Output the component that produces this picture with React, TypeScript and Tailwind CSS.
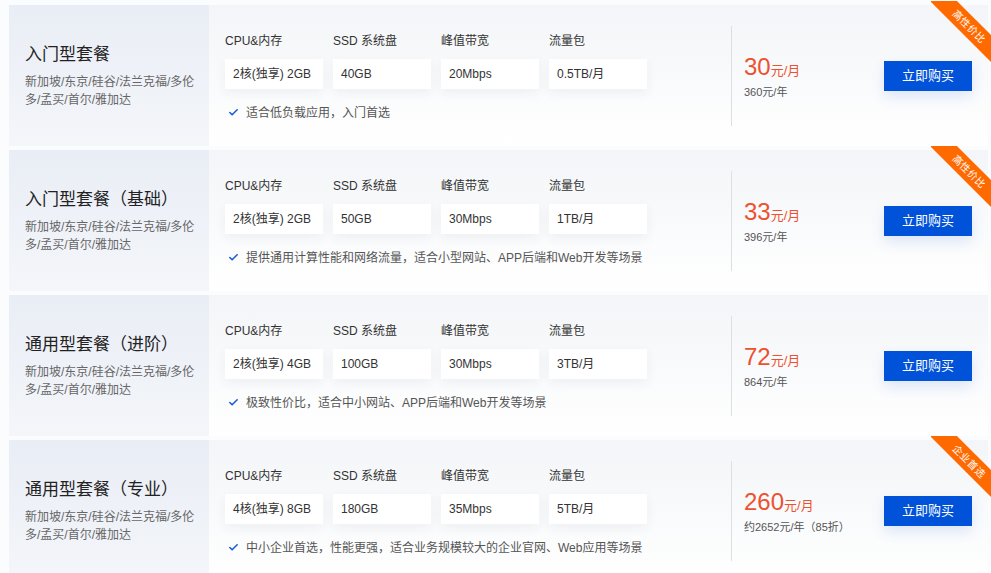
import { Check } from 'lucide-react'

interface Plan {
  id: string
  name: string
  regions: string
  cpu: string
  disk: string
  bandwidth: string
  traffic: string
  desc: string
  price: string
  yearly: string
  tag: string
}

// 套餐数据
const plans: Plan[] = [
  {
    id: 'starter',
    name: '入门型套餐',
    regions: '新加坡/东京/硅谷/法兰克福/多伦多/孟买/首尔/雅加达',
    cpu: '2核(独享) 2GB',
    disk: '40GB',
    bandwidth: '20Mbps',
    traffic: '0.5TB/月',
    desc: '适合低负载应用，入门首选',
    price: '30',
    yearly: '360元/年',
    tag: '高性价比'
  },
  {
    id: 'starter-basic',
    name: '入门型套餐（基础）',
    regions: '新加坡/东京/硅谷/法兰克福/多伦多/孟买/首尔/雅加达',
    cpu: '2核(独享) 2GB',
    disk: '50GB',
    bandwidth: '30Mbps',
    traffic: '1TB/月',
    desc: '提供通用计算性能和网络流量，适合小型网站、APP后端和Web开发等场景',
    price: '33',
    yearly: '396元/年',
    tag: '高性价比'
  },
  {
    id: 'general-adv',
    name: '通用型套餐（进阶）',
    regions: '新加坡/东京/硅谷/法兰克福/多伦多/孟买/首尔/雅加达',
    cpu: '2核(独享) 4GB',
    disk: '100GB',
    bandwidth: '30Mbps',
    traffic: '3TB/月',
    desc: '极致性价比，适合中小网站、APP后端和Web开发等场景',
    price: '72',
    yearly: '864元/年',
    tag: ''
  },
  {
    id: 'general-pro',
    name: '通用型套餐（专业）',
    regions: '新加坡/东京/硅谷/法兰克福/多伦多/孟买/首尔/雅加达',
    cpu: '4核(独享) 8GB',
    disk: '180GB',
    bandwidth: '35Mbps',
    traffic: '5TB/月',
    desc: '中小企业首选，性能更强，适合业务规模较大的企业官网、Web应用等场景',
    price: '260',
    yearly: '约2652元/年（85折）',
    tag: '企业首选'
  }
]

const SpecItem = ({ label, value }: { label: string; value: string }) => (
  <div className="w-[98px]">
    <div className="text-[12px] leading-[18px] text-[#333]">{label}</div>
    <div className="mt-[9px] h-[30px] flex items-center pl-[8px] bg-white text-[12px] text-[#333] shadow-[0_4px_12px_rgba(30,50,90,0.06)]">
      {value}
    </div>
  </div>
)

// 角标
const Ribbon = ({ text }: { text: string }) => (
  <div className="absolute -top-[4px] -right-[3px] w-[60px] h-[66px] overflow-hidden pointer-events-none">
    <div className="absolute left-[-8px] top-[16px] w-[92px] h-[19px] rotate-45 bg-[#ff6a00] flex items-center justify-center text-white text-[10px] leading-none tracking-[0.5px]">
      {text}
    </div>
  </div>
)

const PlanCard = ({ plan }: { plan: Plan }) => (
  <div className="relative flex h-[141px]">
    {/* 左侧 */}
    <div className="w-[200px] shrink-0 flex flex-col justify-center pl-[16px] pr-[8px] bg-gradient-to-b from-[#e9edf5] to-[#f4f6fa]">
      <div className="text-[17px] leading-[24px] text-[#222]">{plan.name}</div>
      <div className="mt-[6px] text-[12px] leading-[18px] text-[#666]">{plan.regions}</div>
    </div>

    {/* 右侧 */}
    <div className="flex-1 flex items-center bg-gradient-to-b from-[#f3f5f8] to-white">
      <div className="w-[522px] shrink-0 pl-[16px] pt-[2px]">
        <div className="flex gap-[10px]">
          <SpecItem label="CPU&内存" value={plan.cpu} />
          <SpecItem label="SSD 系统盘" value={plan.disk} />
          <SpecItem label="峰值带宽" value={plan.bandwidth} />
          <SpecItem label="流量包" value={plan.traffic} />
        </div>
        <div className="mt-[15px] flex items-center gap-[7px] pl-[3px] text-[12px] text-[#555]">
          <Check size={11} strokeWidth={3.5} className="text-[#1a5fd6]" />
          <span>{plan.desc}</span>
        </div>
      </div>

      <div className="w-px h-[100px] bg-[#dcdfe6]" />

      <div className="flex-1 pl-[12px] pt-[2px]">
        <div className="text-[#ec5130] leading-[28px]">
          <span className="text-[24px]">{plan.price}</span>
          <span className="text-[13px]">元/月</span>
        </div>
        <div className="text-[11px] leading-[15px] text-[#555]">{plan.yearly}</div>
      </div>

      <button
        type="button"
        className="mr-[16px] w-[88px] h-[30px] bg-[#0052d9] text-white text-[13px] shadow-[0_6px_14px_rgba(0,82,217,0.12)]"
      >
        立即购买
      </button>
    </div>

    {plan.tag && <Ribbon text={plan.tag} />}
  </div>
)

const App = () => (
  <div className="min-h-screen bg-[#fbfcfd] pt-[5px] pl-[9px] pr-[3px] font-['Liberation_Sans','Noto_Sans_CJK_SC',sans-serif]">
    <div className="flex flex-col gap-[4px]">
      {plans.map((plan) => (
        <PlanCard key={plan.id} plan={plan} />
      ))}
    </div>
  </div>
)

export default App
